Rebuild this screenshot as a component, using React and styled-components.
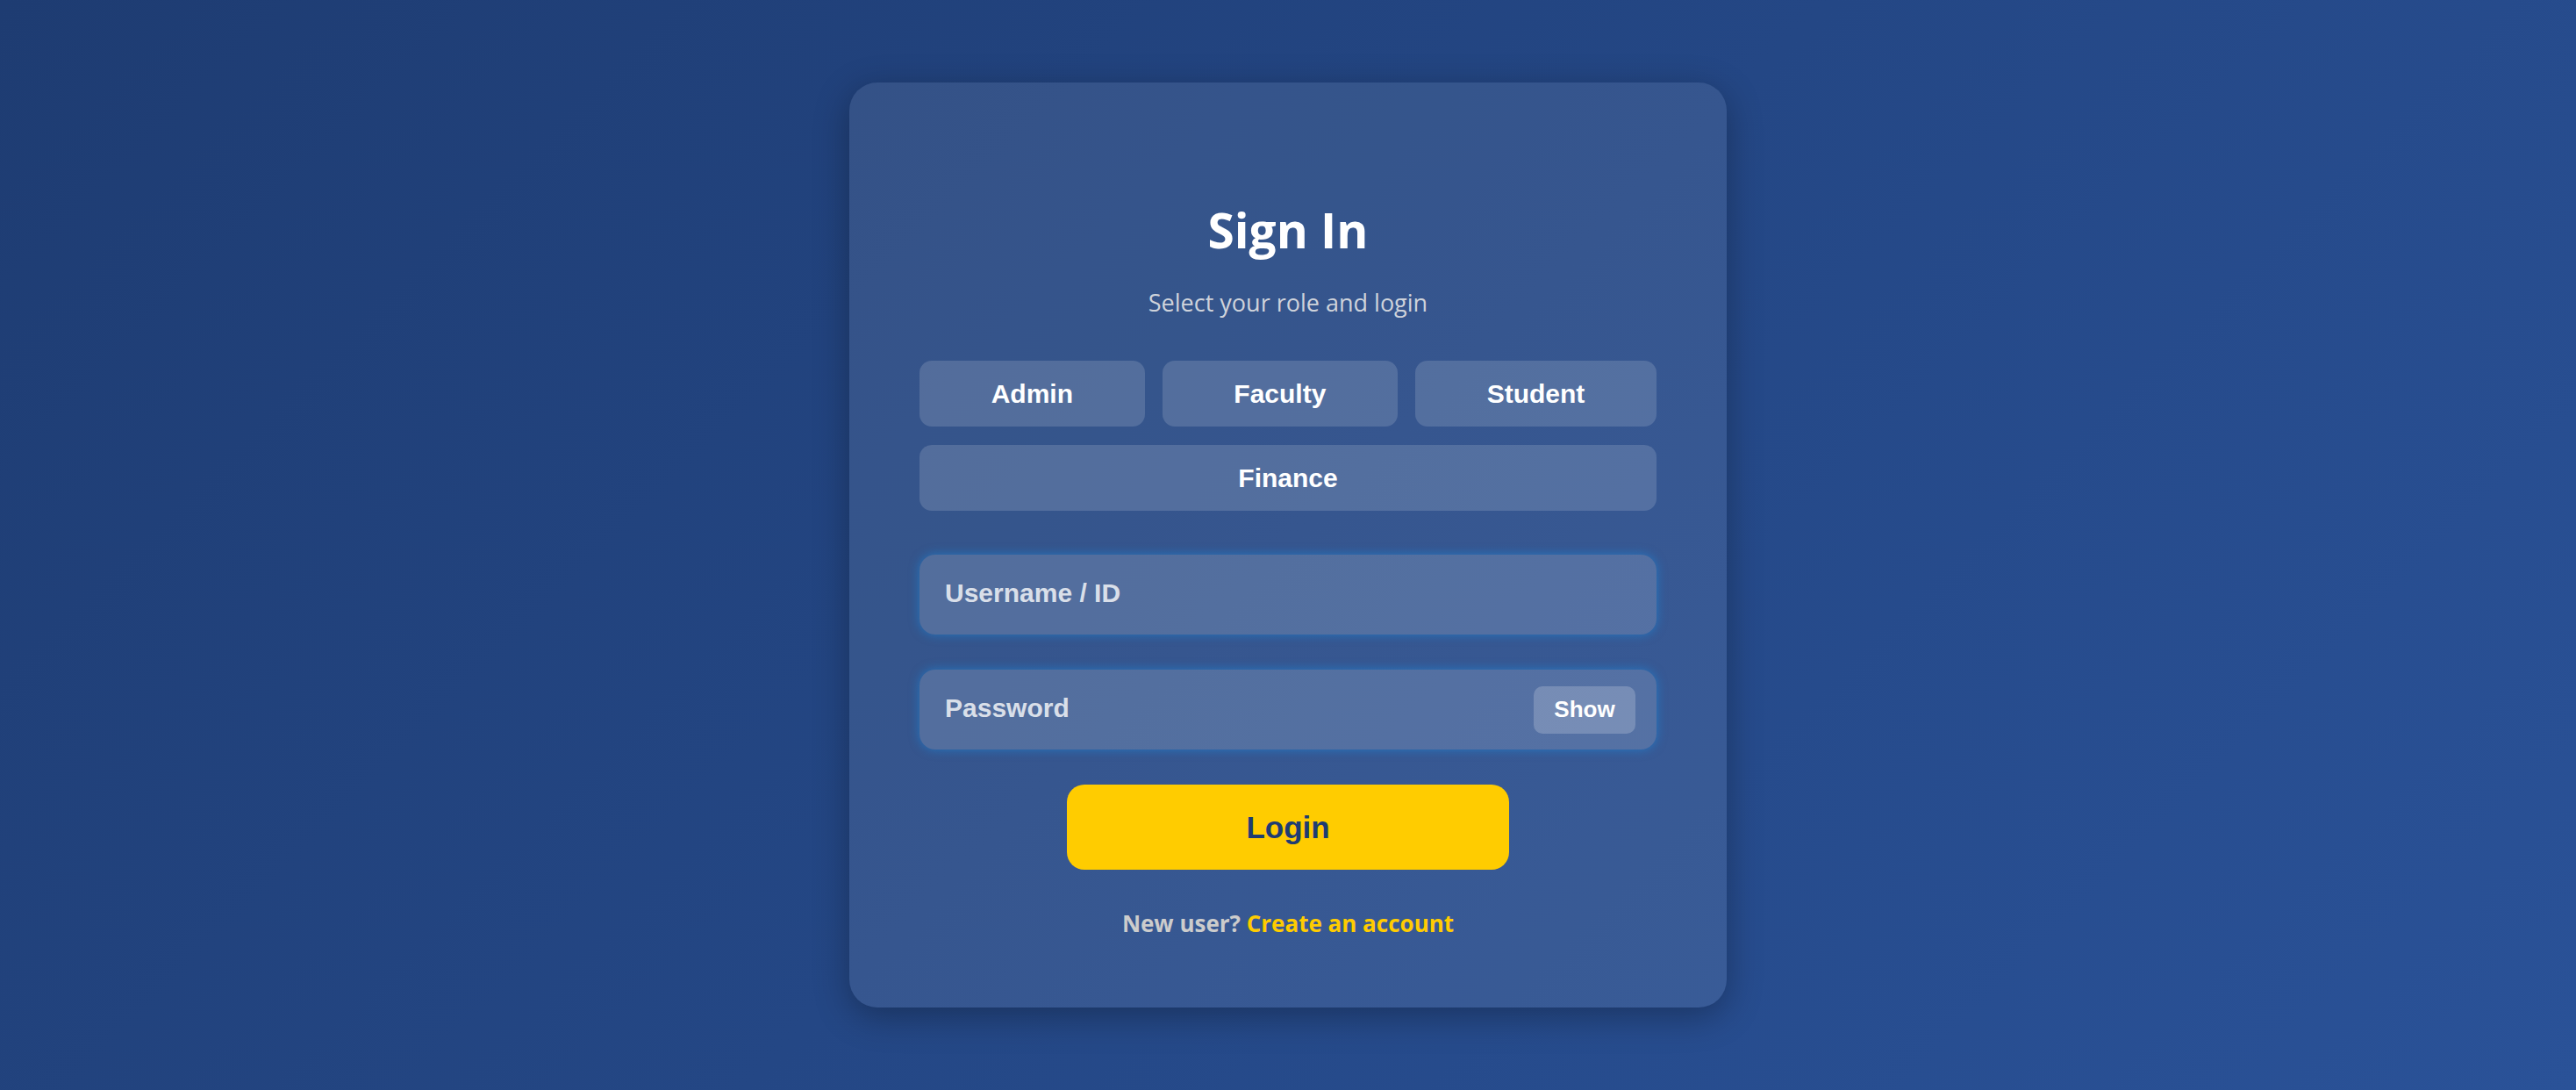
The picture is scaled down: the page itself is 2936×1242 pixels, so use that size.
import React, { useState } from "react";
import styled, { createGlobalStyle } from "styled-components";

const GlobalStyle = createGlobalStyle`
  *, *::before, *::after { box-sizing: border-box; }
  html, body { margin: 0; padding: 0; }
  body {
    background: linear-gradient(135deg, #1e3c72 0%, #2a5298 100%);
    min-height: 100vh;
    font-family: "Liberation Sans", Arial, sans-serif;
  }
`;

const Page = styled.div`
  min-height: 100vh;
  display: flex;
  align-items: center;
  justify-content: center;
`;

const Card = styled.div`
  width: 1000px;
  padding: 80px 80px 83px;
  border-radius: 32px;
  background: rgba(255, 255, 255, 0.085);
  box-shadow: 0 10px 40px rgba(0, 0, 0, 0.3);
  display: flex;
  flex-direction: column;
  align-items: stretch;
`;

const Title = styled.h2`
  margin: 60px 0 0;
  font-family: "Segoe UI", "Open Sans", sans-serif;
  font-weight: 700;
  font-size: 55px;
  line-height: 1;
  color: #ffffff;
  text-align: center;
`;

const Subtitle = styled.p`
  margin: 42px 0 0;
  font-family: "Segoe UI", "Open Sans", sans-serif;
  font-weight: 400;
  font-size: 27px;
  line-height: 1;
  color: #cfd3db;
  text-align: center;
`;

const RoleGrid = styled.div`
  margin-top: 53px;
  display: flex;
  flex-wrap: wrap;
  gap: 21px 20px;
`;

const RoleButton = styled.button`
  flex: 1 1 auto;
  height: 75px;
  padding: 0 60px;
  border: none;
  border-radius: 14px;
  background: ${({ $active }) => ($active ? "rgba(255,255,255,0.3)" : "rgba(255, 255, 255, 0.15)")};
  color: #ffffff;
  font-family: "Liberation Sans", Arial, sans-serif;
  font-weight: 700;
  font-size: 30px;
  cursor: pointer;
`;

const Field = styled.div`
  margin-top: ${({ $gap }) => $gap}px;
  height: 91px;
  display: flex;
  align-items: center;
  border-radius: 18px;
  background: rgba(255, 255, 255, 0.15);
  box-shadow: 0 0 12px rgba(20, 150, 240, 0.5);
`;

const Input = styled.input`
  flex: 1;
  min-width: 0;
  height: 100%;
  padding: 0 0 4px 29px;
  border: none;
  outline: none;
  background: transparent;
  color: #ffffff;
  font-family: "Liberation Sans", Arial, sans-serif;
  font-weight: 700;
  font-size: 30px;
  &::placeholder {
    color: rgba(255, 255, 255, 0.8);
    opacity: 1;
  }
`;

const ShowButton = styled.button`
  margin-right: 24px;
  width: 116px;
  height: 54px;
  border: none;
  border-radius: 10px;
  background: rgba(255, 255, 255, 0.2);
  color: #ffffff;
  font-family: "Liberation Sans", Arial, sans-serif;
  font-weight: 700;
  font-size: 26px;
  cursor: pointer;
`;

const LoginButton = styled.button`
  margin: 40px auto 0;
  width: 60%;
  height: 97px;
  border: none;
  border-radius: 20px;
  background: #ffcc00;
  color: #1e3c72;
  font-family: "Liberation Sans", Arial, sans-serif;
  font-weight: 700;
  font-size: 35px;
  cursor: pointer;
`;

const Footer = styled.p`
  margin: 48px 0 0;
  font-family: "Segoe UI", "Open Sans", sans-serif;
  font-weight: 700;
  font-size: 26px;
  line-height: 1;
  color: #cccccc;
  text-align: center;
`;

const FooterLink = styled.a`
  color: #ffcc00;
  text-decoration: none;
`;

const roles = ["Admin", "Faculty", "Student", "Finance"];

export default function App() {
  const [show, setShow] = useState(false);
  return (
    <>
      <GlobalStyle />
      <Page>
        <Card>
          <Title>Sign In</Title>
          <Subtitle>Select your role and login</Subtitle>
          <RoleGrid>
            {roles.map((r) => (
              <RoleButton key={r} type="button">
                {r}
              </RoleButton>
            ))}
          </RoleGrid>
          <Field $gap={50}>
            <Input type="text" placeholder="Username / ID" />
          </Field>
          <Field $gap={40}>
            <Input type={show ? "text" : "password"} placeholder="Password" />
            <ShowButton type="button" onClick={() => setShow((s) => !s)}>
              {show ? "Hide" : "Show"}
            </ShowButton>
          </Field>
          <LoginButton type="button">Login</LoginButton>
          <Footer>
            New user? <FooterLink href="#">Create an account</FooterLink>
          </Footer>
        </Card>
      </Page>
    </>
  );
}
